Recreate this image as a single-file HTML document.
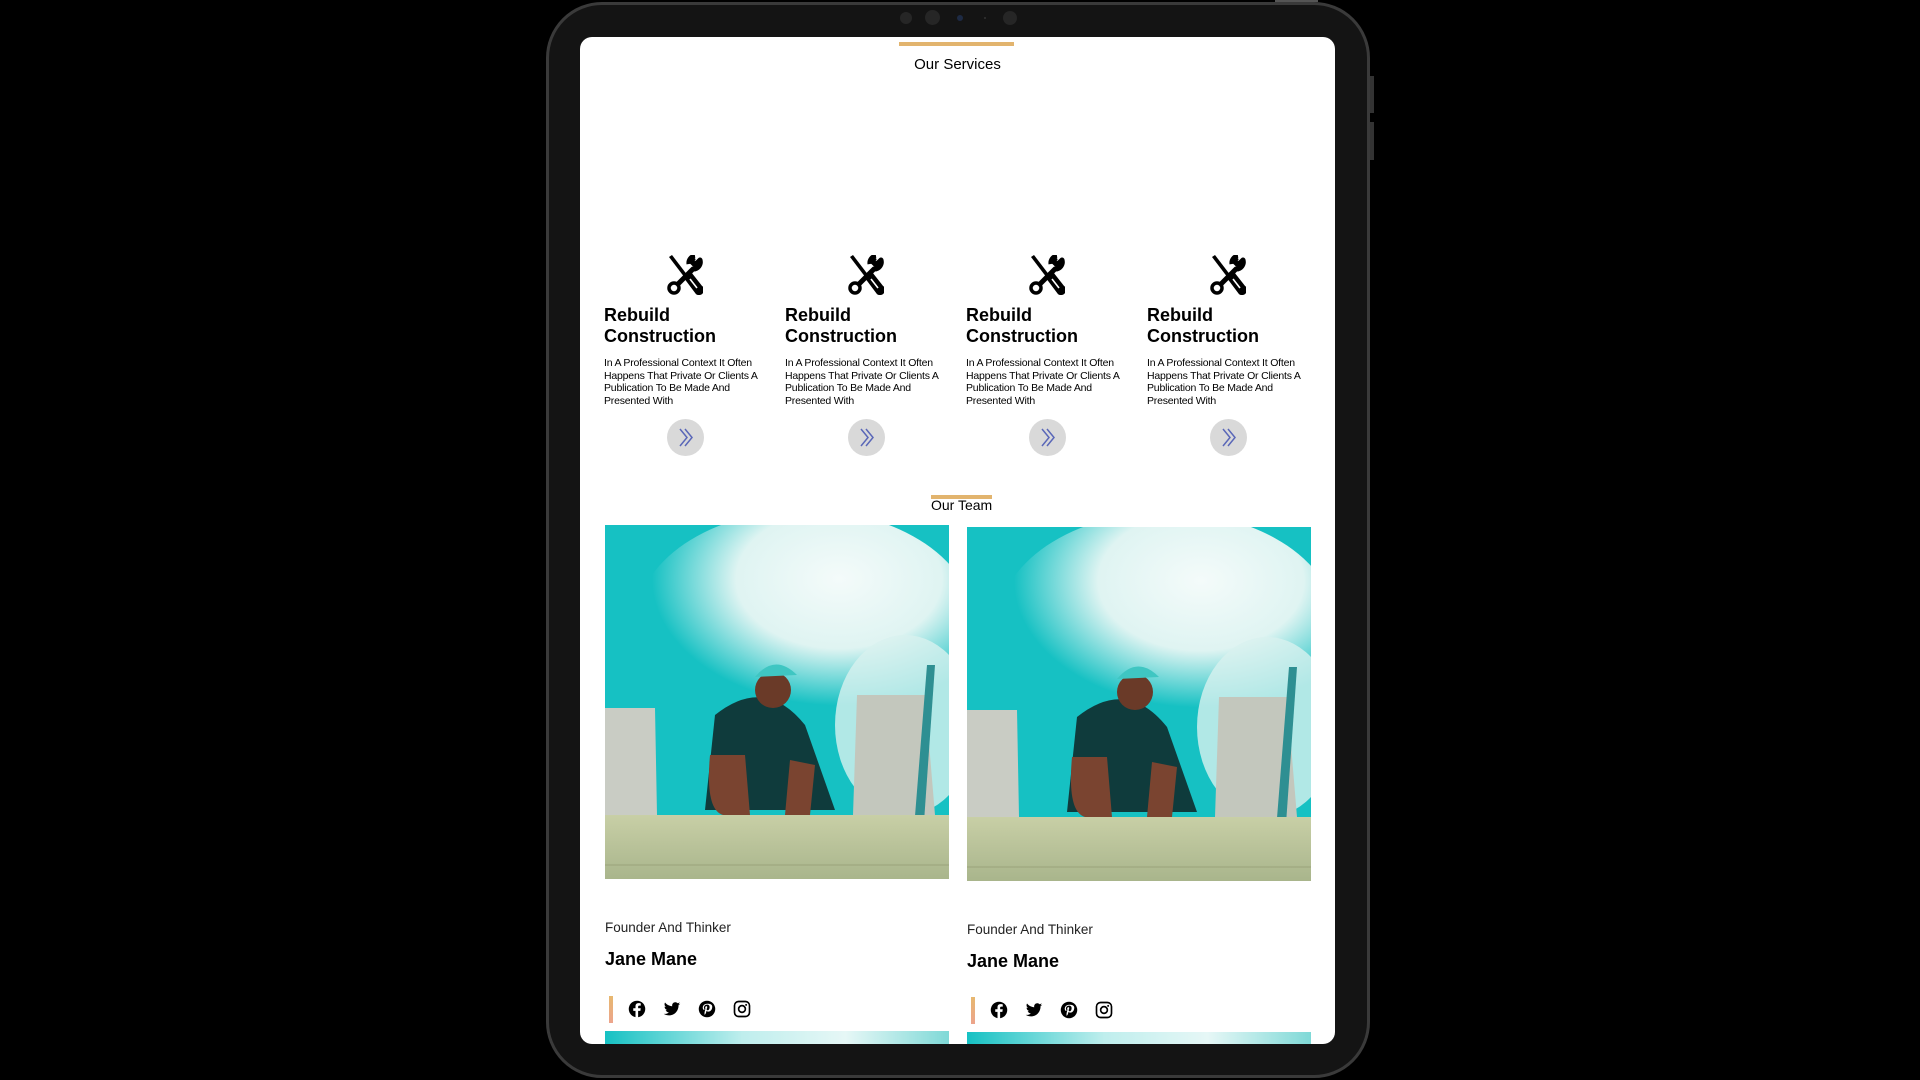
<!DOCTYPE html>
<html><head><meta charset="utf-8"><style>
*{margin:0;padding:0;box-sizing:border-box}
html,body{width:1920px;height:1080px;background:#000;overflow:hidden;font-family:"Liberation Sans",sans-serif;color:#000}
.tab{position:absolute;left:546px;top:2px;width:824px;height:1076px;background:#141414;border-radius:56px;border:3px solid #3a3a3a}
.btn{position:absolute;background:#333;}
.screen{position:absolute;left:580px;top:37px;width:755px;height:1007px;background:#fff;border-radius:12px;overflow:hidden}
.dot{position:absolute;border-radius:50%;background:#262626}
.abs{position:absolute}
.bar{position:absolute;height:4px;background:#e2b46e}
.h{position:absolute;font-size:15px;text-align:center}
.col{position:absolute;top:218px;width:170px}
.col svg.ic{position:absolute;left:63px;top:0}
.col h3{position:absolute;top:50px;font-size:18px;line-height:21px;font-weight:bold}
.col p{position:absolute;top:102px;font-size:10.5px;line-height:12.5px;width:170px;letter-spacing:-0.2px}
.col .c{position:absolute;left:63px;top:164px;width:37px;height:37px;border-radius:50%;background:#d9d9d9}
.role{position:absolute;font-size:13.5px;color:#222}
.name{position:absolute;font-size:18px;font-weight:bold}
.soc{position:absolute;display:flex;gap:17px;align-items:center}
.vb{position:absolute;width:4px;height:27px;background:linear-gradient(#e7b86f,#eca48c)}
</style></head><body>
<div class="tab"></div>
<div class="btn" style="left:1370px;top:76px;width:4px;height:37px"></div>
<div class="btn" style="left:1370px;top:122px;width:4px;height:38px"></div>
<div class="btn" style="left:1275px;top:0;width:43px;height:2px;background:#555"></div>
<div class="dot" style="left:900px;top:12px;width:12px;height:12px"></div>
<div class="dot" style="left:925px;top:10px;width:15px;height:15px"></div>
<div class="dot" style="left:957px;top:15px;width:6px;height:6px;background:#1d2a44"></div>
<div class="dot" style="left:984px;top:17px;width:2px;height:2px;background:#333"></div>
<div class="dot" style="left:1003px;top:11px;width:14px;height:14px"></div>
<div class="screen">
 <div class="bar" style="left:319px;top:5px;width:115px"></div>
 <div class="h" style="left:0;width:755px;top:19px">Our Services</div>

 <svg width="0" height="0" style="position:absolute"><defs>
 <symbol id="tool" viewBox="0 0 36 40">
  <path d="M2 2 L5 0 L21 21 L18 23 Z" fill="#000"/>
  <path d="M18 22 L23 18 L34 32 A3 3 0 0 1 30 38 Z" fill="#000" stroke="#000" stroke-width="3" stroke-linejoin="round"/>
  <path d="M23 24 L30 33" stroke="#fff" stroke-width="1.6"/>
  <path d="M27 3 L24 6 L27 9 L30 8 L33 5 A7 7 0 0 1 26 14 L10 30" stroke="#000" stroke-width="5" fill="none" stroke-linejoin="round"/>
  <path d="M22 9 A7 7 0 0 1 28 1" stroke="#000" stroke-width="5" fill="none"/>
  <circle cx="7" cy="33" r="5" fill="none" stroke="#000" stroke-width="3.5"/>
 </symbol>
 <symbol id="arr" viewBox="0 0 37 37">
  <path d="M13 10 L20 18.5 L13 27 M18 10 L25 18.5 L18 27" stroke="#5a67b8" stroke-width="1.5" fill="none"/>
 </symbol>
 <symbol id="photo" viewBox="0 0 344 354" preserveAspectRatio="none">
  <defs>
   <radialGradient id="cl" cx="0.6" cy="0.3" r="0.55"><stop offset="0" stop-color="#f4fbfa"/><stop offset="0.55" stop-color="#dff4f2"/><stop offset="1" stop-color="#dff4f2" stop-opacity="0"/></radialGradient>
   <linearGradient id="wd" x1="0" y1="0" x2="0" y2="1"><stop offset="0" stop-color="#c8cfa6"/><stop offset="1" stop-color="#a9b58c"/></linearGradient>
  </defs>
  <rect width="344" height="354" fill="#16c1c3"/>
  <ellipse cx="200" cy="100" rx="170" ry="115" fill="url(#cl)"/>
  <ellipse cx="300" cy="200" rx="70" ry="90" fill="#d8f1ef" opacity="0.8"/>
  <path d="M0 183 L50 183 L52 290 L0 290 Z" fill="#c9ccc4"/>
  <path d="M252 170 L320 170 L330 290 L248 290 Z" fill="#c3c7bd"/>
  <path d="M322 140 L330 140 L315 354 L305 354 Z" fill="#2e8f92"/>
  <path d="M110 190 Q160 150 200 200 L230 285 L100 285 Z" fill="#0f3b3c"/>
  <circle cx="168" cy="165" r="18" fill="#6a3a28"/>
  <path d="M150 152 Q170 128 192 150 Z" fill="#3fc6c2"/>
  <path d="M105 230 Q100 285 118 290 L145 290 L140 230 Z" fill="#7a4430"/>
  <path d="M185 235 L180 290 L205 290 L210 240 Z" fill="#7a4430"/>
  <rect x="0" y="290" width="344" height="64" fill="url(#wd)"/>
  <path d="M0 340 L344 340" stroke="#9aa37a" stroke-width="1"/>
 </symbol>
 <symbol id="fb" viewBox="0 0 24 24"><circle cx="12" cy="12" r="11" fill="#000"/><path d="M13.5 24 V14.5 H16.5 L17 11 H13.5 V9 C13.5 8 14 7.5 15 7.5 H17 V4.5 C16 4.3 15 4.2 14 4.2 C11.5 4.2 10 5.7 10 8.3 V11 H7 V14.5 H10 V24 Z" fill="#fff"/></symbol>
 <symbol id="tw" viewBox="0 0 24 24"><path d="M23 5 C22 5.4 21.2 5.6 20.3 5.7 C21.3 5.1 22 4.2 22.3 3.2 C21.4 3.7 20.4 4.1 19.4 4.3 C17.6 2.4 14.5 2.6 13 4.6 C12.2 5.7 12 7 12.3 8.3 C8.5 8.1 5.1 6.3 2.7 3.4 C1.5 5.5 2.1 8.1 4.1 9.4 C3.4 9.4 2.7 9.2 2.1 8.9 C2.1 11.1 3.6 12.9 5.7 13.4 C5 13.6 4.3 13.6 3.6 13.5 C4.2 15.3 5.9 16.6 7.8 16.6 C5.9 18.1 3.5 18.8 1 18.5 C3.1 19.8 5.5 20.5 8 20.5 C16.3 20.5 20.9 13.5 20.7 7 C21.6 6.4 22.4 5.7 23 5 Z" fill="#000"/></symbol>
 <symbol id="pi" viewBox="0 0 24 24"><circle cx="12" cy="12" r="11" fill="#000"/><path d="M12.3 5 C8.3 5 6.3 7.8 6.3 10.2 C6.3 11.6 6.9 12.9 8 13.3 C8.2 13.4 8.4 13.3 8.4 13.1 L8.6 12.3 C8.7 12.1 8.6 12 8.5 11.8 C8.1 11.4 7.9 10.8 7.9 10.1 C7.9 8 9.5 6.1 12 6.1 C14.2 6.1 15.5 7.5 15.5 9.3 C15.5 11.7 14.4 13.7 12.9 13.7 C12 13.7 11.4 13 11.6 12.1 C11.8 11.1 12.3 10 12.3 9.3 C12.3 8.6 11.9 8.1 11.2 8.1 C10.3 8.1 9.6 9 9.6 10.2 C9.6 11 9.9 11.5 9.9 11.5 L8.8 16.1 C8.5 17.5 8.8 19.5 8.8 19.7 C8.9 19.8 9 19.8 9.1 19.7 C9.2 19.5 10.4 18.1 10.8 16.6 L11.4 14.3 C11.8 15 12.8 15.5 13.8 15.5 C16.9 15.5 19 12.7 19 8.9 C19 6.1 16.6 5 12.3 5 Z" fill="#fff"/></symbol>
 <symbol id="ig" viewBox="0 0 24 24"><rect x="2" y="2" width="20" height="20" rx="5.5" fill="none" stroke="#000" stroke-width="2.2"/><circle cx="12" cy="12" r="4.5" fill="none" stroke="#000" stroke-width="2.2"/><circle cx="17.5" cy="6.5" r="1.3" fill="#000"/></symbol>
 </defs></svg>

 <div class="col" style="left:24px"><svg class="ic" width="36" height="40"><use href="#tool"/></svg><h3>Rebuild<br>Construction</h3><p>In A Professional Context It Often Happens That Private Or Clients A Publication To Be Made And Presented With</p><div class="c"><svg width="37" height="37"><use href="#arr"/></svg></div></div>
 <div class="col" style="left:205px"><svg class="ic" width="36" height="40"><use href="#tool"/></svg><h3>Rebuild<br>Construction</h3><p>In A Professional Context It Often Happens That Private Or Clients A Publication To Be Made And Presented With</p><div class="c"><svg width="37" height="37"><use href="#arr"/></svg></div></div>
 <div class="col" style="left:386px"><svg class="ic" width="36" height="40"><use href="#tool"/></svg><h3>Rebuild<br>Construction</h3><p>In A Professional Context It Often Happens That Private Or Clients A Publication To Be Made And Presented With</p><div class="c"><svg width="37" height="37"><use href="#arr"/></svg></div></div>
 <div class="col" style="left:567px"><svg class="ic" width="36" height="40"><use href="#tool"/></svg><h3>Rebuild<br>Construction</h3><p>In A Professional Context It Often Happens That Private Or Clients A Publication To Be Made And Presented With</p><div class="c"><svg width="37" height="37"><use href="#arr"/></svg></div></div>

 <div class="bar" style="left:351px;top:458px;width:61px"></div>
 <div class="h" style="left:351px;width:61px;top:460px;font-size:14px;white-space:nowrap">Our Team</div>

 <svg class="abs" style="left:25px;top:488px" width="344" height="354"><use href="#photo" width="344" height="354"/></svg>
 <svg class="abs" style="left:387px;top:490px" width="344" height="354"><use href="#photo" width="344" height="354"/></svg>

 <div class="role" style="left:25px;top:883px">Founder And Thinker</div>
 <div class="name" style="left:25px;top:912px">Jane Mane</div>
 <div class="vb" style="left:29px;top:959px"></div>
 <div class="soc" style="left:48px;top:963px"><svg width="18" height="18"><use href="#fb"/></svg><svg width="18" height="18"><use href="#tw"/></svg><svg width="18" height="18"><use href="#pi"/></svg><svg width="18" height="18"><use href="#ig"/></svg></div>

 <div class="role" style="left:387px;top:885px">Founder And Thinker</div>
 <div class="name" style="left:387px;top:914px">Jane Mane</div>
 <div class="vb" style="left:391px;top:960px"></div>
 <div class="soc" style="left:410px;top:964px"><svg width="18" height="18"><use href="#fb"/></svg><svg width="18" height="18"><use href="#tw"/></svg><svg width="18" height="18"><use href="#pi"/></svg><svg width="18" height="18"><use href="#ig"/></svg></div>

 <div class="abs" style="left:25px;top:994px;width:344px;height:20px;background:linear-gradient(90deg,#16c1c3,#bfeeed 40%,#e6f7f6 70%,#7fd9d7)"></div>
 <div class="abs" style="left:387px;top:995px;width:344px;height:20px;background:linear-gradient(90deg,#16c1c3,#bfeeed 40%,#e6f7f6 70%,#7fd9d7)"></div>
</div>
</body></html>
